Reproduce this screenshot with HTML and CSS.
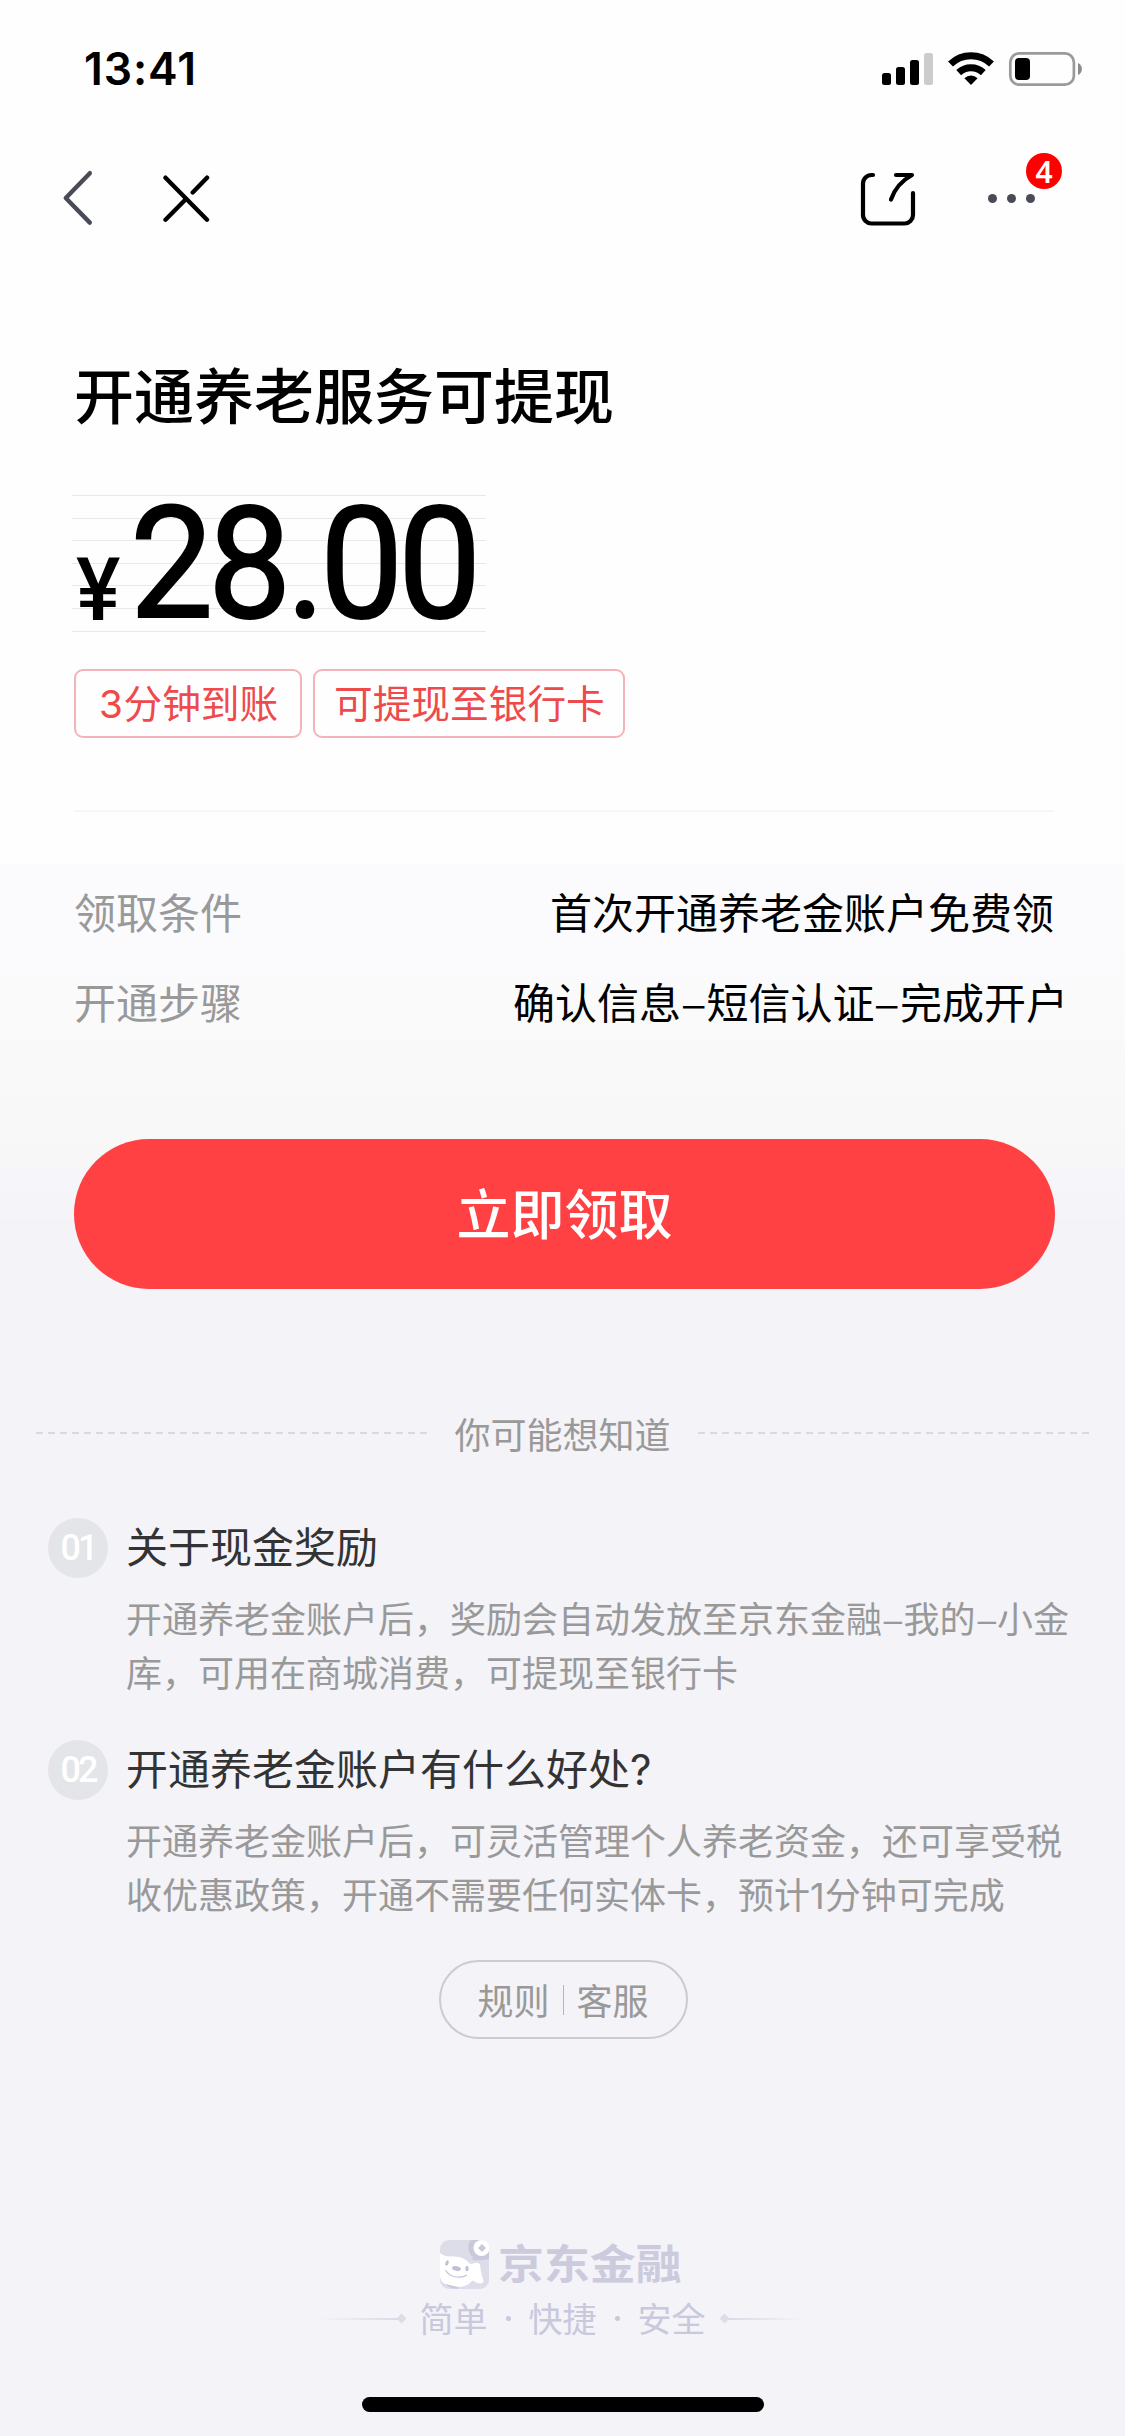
FILE: index.html
```html
<!DOCTYPE html>
<html lang="zh-CN">
<head>
<meta charset="utf-8">
<title>开通养老服务可提现</title>
<link rel="stylesheet" href="styles.css">
</head>
<body>
<header class="status">
  <span class="time">13:41</span>
  <svg class="status-icons" width="202" height="36" viewBox="881 51 202 36">
    <rect x="882" y="73" width="9" height="12" rx="2.5"/>
    <rect x="896" y="67" width="9" height="18" rx="2.5"/>
    <rect x="910" y="60" width="9" height="25" rx="2.5"/>
    <rect x="924" y="53" width="9" height="32" rx="2.5" fill="#ccc"/>
    <g fill="none" stroke="#000" stroke-width="7">
      <path d="M950.5 64a29.500 29.500 0 0 1 41 0"/>
      <path d="M958.700 72.600a18 18 0 0 1 24.600 0"/>
    </g>
    <path d="M971 85l-6.6-6.8a9.4 9.4 0 0 1 13.2 0z"/>
    <rect x="1010.3" y="53.3" width="63.6" height="31.4" rx="9" fill="none" stroke="#9a9a9a" stroke-width="2.7"/>
    <rect x="1015" y="58" width="15" height="22" rx="4"/>
    <path d="M1078 63a6.6 6.6 0 0 1 0 12z" fill="#8a8a8a"/>
  </svg>
</header>
<nav class="nav">
  <svg class="nav-left" width="150" height="60" viewBox="60 168 150 60" fill="none" stroke-width="4.4" stroke-linecap="round" stroke-linejoin="round">
    <path d="M89.8 173.2L65.8 198l24 24.6" stroke="#494c57"/>
    <path d="M165.5 177.7l41.5 42M207 177.7l-14.3 14.8M186 199l-20.500 20.700" stroke="#000"/>
  </svg>
  <svg width="60" height="60" viewBox="858 168 60 60" fill="none" stroke="#000" stroke-width="4.200" stroke-linecap="round" stroke-linejoin="round">
    <path d="M873 175h-1.500a8.500 8.500 0 0 0-8.500 8.500v31.500a8.500 8.500 0 0 0 8.500 8.500h33a8.500 8.500 0 0 0 8.500-8.500v-22"/>
    <path d="M896 175h16q-15.500 8.500-21 24.500"/>
  </svg>
  <div class="more">
    <span class="dot"></span><span class="dot"></span><span class="dot"></span>
    <span class="count">4</span>
  </div>
</nav>
<main class="main">
  <h1 class="title">开通养老服务可提现</h1>
  <div class="amount"><span class="yen">¥</span><span class="num">28.00</span></div>
  <div class="tags"><span class="tag"><b>3</b>分钟到账</span><span class="tag">可提现至银行卡</span></div>
  <dl class="rows">
    <div class="row"><dt>领取条件</dt><dd>首次开通养老金账户免费领</dd></div>
    <div class="row"><dt>开通步骤</dt><dd class="wide">确认信息<i>–</i>短信认证<i>–</i>完成开户</dd></div>
  </dl>
  <button class="cta">立即领取</button>
</main>
<section class="faq">
  <h2 class="faq-title">你可能想知道</h2>
  <article class="item">
    <span class="no">01</span>
    <h3>关于现金奖励</h3>
    <p>开通养老金账户后，奖励会自动发放至京东金融<i>–</i>我的<i>–</i>小金<br>库，可用在商城消费，可提现至银行卡</p>
  </article>
  <article class="item">
    <span class="no">02</span>
    <h3>开通养老金账户有什么好处<b>?</b></h3>
    <p>开通养老金账户后，可灵活管理个人养老资金，还可享受税<br>收优惠政策，开通不需要任何实体卡，预计<b>1</b>分钟可完成</p>
  </article>
</section>
<div class="links"><span>规则</span><span class="bar"></span><span>客服</span></div>
<footer class="footer">
  <div class="brand">
    <svg width="49" height="49" viewBox="0 0 49 49">
      <defs><clipPath id="tile"><rect width="49" height="49" rx="9"/></clipPath></defs>
      <g clip-path="url(#tile)">
        <rect width="49" height="49" fill="#dcdde8"/>
        <path d="M31 0a12 12 0 0 0 2 17l-1 3q8 1 17-1V0z" fill="#c9c9dc"/>
        <path d="M0 13q5 4 12 3.500 12-1 18 7.500l3-.500q5-2 7 1 1 10 3.500 16 0 4-6 2.500l-5-2.500q-6 7-14 6.500L5 44q-4-2-5-7z" fill="#fff"/>
        <path d="M5 44l14 3.500-2 1.500q-8-1-12-5z" fill="#c9c9dc"/>
        <g fill="#bfc0d4"><ellipse cx="7" cy="23" rx="1.600" ry="2.700" transform="rotate(20 7 23)"/><ellipse cx="27" cy="28.500" rx="1.600" ry="2.700"/><ellipse cx="16.500" cy="28.500" rx="4.500" ry="2.300" transform="rotate(10 16.500 28.500)"/></g>
        <path d="M5.500 30q3 6 11 7 7 .500 10.500-2" fill="none" stroke="#c4c5d8" stroke-width="1.200"/>
      </g>
      <circle cx="41.500" cy="8" r="8" fill="#fff"/>
      <path d="M42 4l4 4-4 4-4-4z" fill="#c9c9dc"/>
    </svg>
    <span class="brand-name">京东金融</span>
  </div>
  <div class="slogan">
    <span class="rule left"></span>
    <span>简单</span><span class="sep"></span><span>快捷</span><span class="sep"></span><span>安全</span>
    <span class="rule right"></span>
  </div>
</footer>
<div class="home"></div>
</body>
</html>
```
FILE: styles.css
```css
* { box-sizing: border-box; margin: 0; padding: 0; }
body {
  width: 1125px;
  height: 2436px;
  overflow: hidden;
  display: flex;
  flex-direction: column;
  font-family: "Noto Sans CJK SC", sans-serif;
  color: #000;
  background: linear-gradient(#fefefe 0, #fefefe 864px, #fbfbfd 864px, #fbfbfd 950px, #f9f9f9 1068px, #f7f7f7 1167px, #f6f6f9 1169px, #f5f5f9 1219px, #f3f3f8 1220px);
}
i, b { font-style: normal; font-weight: inherit; }

.status { height: 132px; padding: 6px 42px 0 84px; display: flex; align-items: center; justify-content: space-between; }
.time { font: 600 44.500px/60px Inter, sans-serif; letter-spacing: .900px; }

.nav { height: 132px; padding: 0 84px 0 60px; display: flex; align-items: center; }
.nav-left { margin-right: 648px; }
.more { position: relative; display: flex; gap: 10px; margin-left: 70px; }
.dot { width: 9px; height: 9px; border-radius: 50%; background: #494c57; }
.count { position: absolute; left: 38px; top: -41px; width: 36px; height: 36px; border-radius: 50%; background: #f00; color: #fff; font: 600 30px/37px "Noto Sans", sans-serif; text-align: center; }

.main { padding: 87px 71px 0 74px; }
.title { font-size: 60px; line-height: 84px; font-weight: 500; }
.amount {
  margin: 60px 0 0 -2px;
  width: 414px;
  height: 137px;
  padding-left: 4px;
  display: flex;
  align-items: baseline;
  background: repeating-linear-gradient(#e8e8e8 0, #e8e8e8 1px, transparent 1px, transparent 22.600px);
  font-family: Roboto, sans-serif;
  line-height: 138px;
  white-space: nowrap;
}
.yen { flex: none; width: 54px; font-size: 88px; font-weight: 500; transform: translateY(3px) scaleX(.950); transform-origin: left; }
.num { flex: none; font-size: 156px; font-weight: 400; letter-spacing: -5.500px; -webkit-text-stroke: 2px #000; transform: scaleX(.950); transform-origin: left; }

.tags { display: flex; gap: 11px; margin-top: 37px; }
.tag { width: 228px; height: 69px; padding-left: 23px; border: 2px solid #f4b4b7; border-radius: 9px; color: #ee4a4c; font-size: 38.700px; line-height: 60px; }
.tag + .tag { width: 312px; padding-left: 19px; }
.tag b { display: inline-block; width: 24.500px; font-family: Inter, sans-serif; }

.rows { margin-top: 72px; border-top: 2px solid #f5f5fa; padding-top: 69px; display: grid; gap: 30px; font-size: 42px; line-height: 60px; }
.row { display: flex; justify-content: space-between; }
.row dt { color: #999; }
.row .wide { margin-right: -14px; }
.row i { display: inline-block; width: 25.500px; text-align: center; transform: scaleX(1.150); }

.cta { display: block; width: 981px; height: 150px; margin-top: 108px; border: 0; border-radius: 75px; background: #ff4144; color: #fff; font: 500 54px/141px "Noto Sans CJK SC", sans-serif; padding-bottom: 5px; }

.faq { margin-top: 119px; padding: 0 36px; }
.faq-title { display: flex; justify-content: space-between; align-items: center; color: #999; font-size: 36px; line-height: 50px; font-weight: 400; }
.faq-title::before, .faq-title::after { content: ""; width: 391px; height: 2px; background: repeating-linear-gradient(90deg, #dadade 0 7px, transparent 7px 12px); }
.item { display: grid; grid-template-columns: 60px 1fr; column-gap: 18px; row-gap: 12px; margin: 0 -36px 42px 12px; }
.faq-title + .item { margin-top: 60px; }
.no { width: 60px; height: 60px; border-radius: 50%; background: #e4e5e8; color: #fff; font: 500 36px/60px Roboto, sans-serif; text-align: center; letter-spacing: -3px; }
.item h3 { color: #333; font-size: 42px; line-height: 53px; font-weight: 400; }
.item p { grid-column: 2; color: #999; font-size: 36px; line-height: 54px; white-space: nowrap; }
.item i { display: inline-block; width: 21.500px; text-align: center; transform: scaleX(1.150); }
.item b { font-family: Inter, sans-serif; }

.links { align-self: center; width: 249px; height: 79px; margin: -5px -1px 0 0; border: 2px solid #ccc; border-radius: 40px; display: flex; justify-content: center; align-items: center; gap: 13px; color: #999; font-size: 36px; line-height: 70px; }
.links span:not(.bar) { margin-top: -2px; }
.bar { width: 1px; height: 30px; background: #b5b5b8; }

.footer { margin-top: 201px; }
.brand { display: flex; justify-content: center; gap: 9px; padding-right: 5px; }
.brand-name { width: 182px; color: #cccbde; font-size: 41px; line-height: 43px; font-weight: 700; transform: scaleX(1.120); transform-origin: left; }
.slogan { height: 50px; margin-top: 5px; display: flex; justify-content: center; align-items: center; color: #c9c8dc; font-size: 34px; line-height: 46px; }
.slogan > :not(.rule) { margin-top: -2px; }
.sep { width: 5px; height: 5px; border-radius: 50%; margin: 0 18px; background: #c9c8dc; }
.rule { position: relative; width: 85px; height: 2px; }
.rule.left { margin-right: 15px; background: linear-gradient(90deg, transparent, #d8d8e6); }
.rule.right { margin-left: 15px; background: linear-gradient(270deg, transparent, #d8d8e6); }
.rule::after { content: ""; position: absolute; top: -3px; width: 7px; height: 7px; background: #dcdde8; transform: rotate(45deg); }
.left::after { right: 0; }
.right::after { left: 0; }

.home { align-self: center; width: 402px; height: 15px; margin-top: 53px; border-radius: 8px; background: #000; }
```
